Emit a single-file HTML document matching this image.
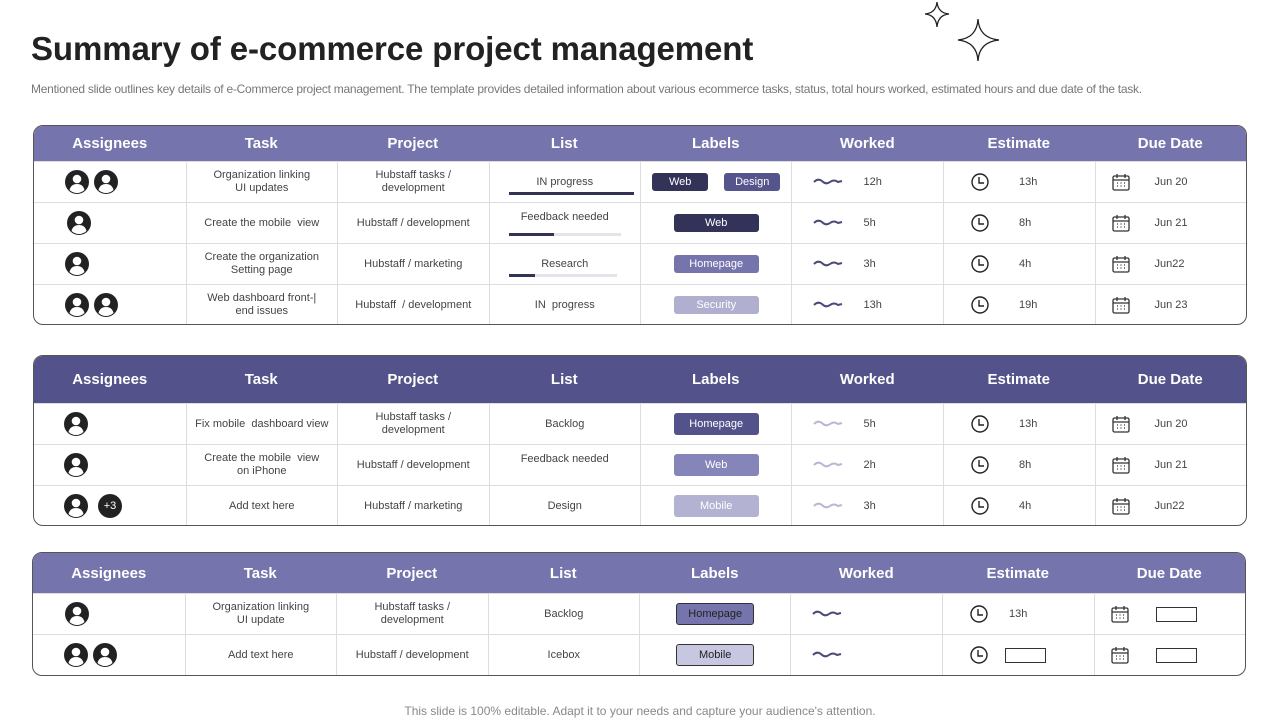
<!DOCTYPE html>
<html><head><meta charset="utf-8"><style>
*{margin:0;padding:0;box-sizing:border-box}
body{width:1280px;height:720px;background:#fff;font-family:"Liberation Sans",sans-serif;position:relative;overflow:hidden;color:#333}
h1{position:absolute;left:31px;top:30px;font-size:33px;font-weight:700;color:#222;letter-spacing:-0.1px}
.sub{position:absolute;left:31px;top:82px;font-size:12px;color:#777;letter-spacing:-0.25px}
.foot{position:absolute;left:0;width:1280px;text-align:center;top:704px;font-size:12px;color:#888}
.tbl{position:absolute;left:33px;width:1214px;border:1px solid #555;border-radius:10px;overflow:hidden;background:#fff}
.hd{display:flex;color:#fff;font-weight:700;font-size:15px;align-items:center}
.hd div{width:151.75px;text-align:center}
.row{display:flex;border-top:1px solid #ddd;height:41px}
.row>div{width:151.75px;border-left:1px solid #ddd;display:flex;align-items:center;justify-content:center;text-align:center;font-size:11px;color:#444;line-height:13px;position:relative}
.row>div:first-child{border-left:none;justify-content:flex-start;padding-left:31px}
.row>div:nth-child(6){justify-content:flex-start;padding-left:21px}
.row>div:nth-child(7){justify-content:flex-start;padding-left:26px}
.row>div:nth-child(8){justify-content:flex-start;padding-left:15px}
.tag{display:inline-block;width:85px;height:18px;line-height:18px;border-radius:3px;color:#fff;font-size:11px}
.wv{margin-right:20px}
.ck{margin-right:29px}
.cl{margin-right:24px}
</style></head><body>
<h1>Summary of e-commerce project management</h1>
<div class="sub">Mentioned slide outlines key details of e-Commerce project management. The template provides detailed information about various ecommerce tasks, status, total hours worked, estimated hours and due date of the task.</div>
<svg style="position:absolute;left:920px;top:0" width="90" height="65"><path d="M17 2 Q18 13 29 14 Q18 15 17 27 Q16 15 5 14 Q16 13 17 2Z" fill="none" stroke="#222" stroke-width="1.3"/><path d="M58 19 Q59 38 79 40 Q59 42 58 61 Q57 42 38 40 Q57 38 58 19Z" fill="none" stroke="#222" stroke-width="1.3"/></svg>

<svg width="0" height="0" style="position:absolute"><defs>
<symbol id="p" viewBox="0 0 24 24"><circle cx="12" cy="12" r="12" fill="#222"/><circle cx="12" cy="9" r="4.3" fill="#fff"/><path d="M4.5 20 Q6 14 12 14 Q18 14 19.5 20 Q16 23 12 23 Q8 23 4.5 20Z" fill="#fff"/></symbol>
<symbol id="w" viewBox="0 0 30 12"><path d="M1 6 Q5 2 9 5 Q13 9 17 6 Q21 3 25 6 L29 5" fill="none" stroke="currentColor" stroke-width="2"/></symbol>
<symbol id="c" viewBox="0 0 20 20"><circle cx="10" cy="10" r="8" fill="none" stroke="#222" stroke-width="1.4"/><path d="M9 5 V11 H14" fill="none" stroke="#222" stroke-width="1.4"/></symbol>
<symbol id="d" viewBox="0 0 20 20"><rect x="2" y="4" width="16" height="14" rx="1.5" fill="none" stroke="#333" stroke-width="1.3"/><path d="M2 8 H18 M6 2 V6 M14 2 V6" stroke="#333" stroke-width="1.3"/><path d="M6 11h1M9.5 11h1M13 11h1M6 14h1M9.5 14h1M13 14h1" stroke="#333" stroke-width="1.3"/></symbol>
</defs></svg>

<!-- Table 1 -->
<div class="tbl" style="top:125px;height:200px">
<div class="hd" style="background:#7674ac;height:35px"><div>Assignees</div><div>Task</div><div>Project</div><div>List</div><div>Labels</div><div>Worked</div><div>Estimate</div><div>Due Date</div></div>
<div class="row"><div><svg width="24" height="24" style="margin-right:5px"><use href="#p"/></svg><svg width="24" height="24"><use href="#p"/></svg></div><div>Organization linking<br>UI updates</div><div>Hubstaff tasks /<br>development</div><div><span style="position:absolute;top:14px;width:100%">IN progress</span><span style="position:absolute;left:19px;top:30px;width:125px;height:3px;background:#333355"></span></div><div><span class="tag" style="width:56px;background:#33335a;margin-right:16px">Web</span><span class="tag" style="width:56px;background:#55548c">Design</span></div><div><svg class="wv" width="30" height="12" style="color:#4a4a7a"><use href="#w"/></svg>12h</div><div><svg class="ck" width="20" height="20"><use href="#c"/></svg>13h</div><div><svg class="cl" width="20" height="20"><use href="#d"/></svg>Jun 20</div></div>
<div class="row"><div style="padding-left:33px"><svg width="24" height="24"><use href="#p"/></svg></div><div>Create the mobile&nbsp; view</div><div>Hubstaff / development</div><div><span style="position:absolute;top:8px;width:100%">Feedback needed</span><span style="position:absolute;left:19px;top:30px;width:112px;height:3px;background:#e4e4ea"></span><span style="position:absolute;left:19px;top:30px;width:45px;height:3px;background:#333355"></span></div><div><span class="tag" style="background:#33335a">Web</span></div><div><svg class="wv" width="30" height="12" style="color:#4a4a7a"><use href="#w"/></svg>5h</div><div><svg class="ck" width="20" height="20"><use href="#c"/></svg>8h</div><div><svg class="cl" width="20" height="20"><use href="#d"/></svg>Jun 21</div></div>
<div class="row"><div><svg width="24" height="24"><use href="#p"/></svg></div><div>Create the organization<br>Setting page</div><div>Hubstaff / marketing</div><div><span style="position:absolute;top:14px;width:100%">Research</span><span style="position:absolute;left:19px;top:30px;width:108px;height:3px;background:#e4e4ea"></span><span style="position:absolute;left:19px;top:30px;width:26px;height:3px;background:#333355"></span></div><div><span class="tag" style="background:#7674ac">Homepage</span></div><div><svg class="wv" width="30" height="12" style="color:#4a4a7a"><use href="#w"/></svg>3h</div><div><svg class="ck" width="20" height="20"><use href="#c"/></svg>4h</div><div><svg class="cl" width="20" height="20"><use href="#d"/></svg>Jun22</div></div>
<div class="row"><div><svg width="24" height="24" style="margin-right:5px"><use href="#p"/></svg><svg width="24" height="24"><use href="#p"/></svg></div><div>Web dashboard front-|<br>end issues</div><div>Hubstaff&nbsp; / development</div><div>IN&nbsp; progress</div><div><span class="tag" style="background:#b0afd0">Security</span></div><div><svg class="wv" width="30" height="12" style="color:#4a4a7a"><use href="#w"/></svg>13h</div><div><svg class="ck" width="20" height="20"><use href="#c"/></svg>19h</div><div><svg class="cl" width="20" height="20"><use href="#d"/></svg>Jun 23</div></div>
</div>

<!-- Table 2 -->
<div class="tbl" style="top:355px;height:171px">
<div class="hd" style="background:#53528a;height:47px"><div>Assignees</div><div>Task</div><div>Project</div><div>List</div><div>Labels</div><div>Worked</div><div>Estimate</div><div>Due Date</div></div>
<div class="row"><div style="padding-left:30px"><svg width="24" height="24"><use href="#p"/></svg></div><div>Fix mobile&nbsp; dashboard view</div><div>Hubstaff tasks /<br>development</div><div>Backlog</div><div><span class="tag" style="background:#53528a;height:22px;line-height:22px">Homepage</span></div><div><svg class="wv" width="30" height="12" style="color:#b8b8d4"><use href="#w"/></svg>5h</div><div><svg class="ck" width="20" height="20"><use href="#c"/></svg>13h</div><div><svg class="cl" width="20" height="20"><use href="#d"/></svg>Jun 20</div></div>
<div class="row"><div style="padding-left:30px"><svg width="24" height="24"><use href="#p"/></svg></div><div>Create the mobile&nbsp; view<br>on iPhone</div><div>Hubstaff / development</div><div style="align-items:flex-start;padding-top:8px">Feedback needed</div><div><span class="tag" style="background:#8685ba;height:22px;line-height:22px">Web</span></div><div><svg class="wv" width="30" height="12" style="color:#b8b8d4"><use href="#w"/></svg>2h</div><div><svg class="ck" width="20" height="20"><use href="#c"/></svg>8h</div><div><svg class="cl" width="20" height="20"><use href="#d"/></svg>Jun 21</div></div>
<div class="row"><div style="padding-left:30px"><svg width="24" height="24" style="margin-right:10px"><use href="#p"/></svg><span style="display:inline-block;width:24px;height:24px;border-radius:50%;background:#222;color:#fff;line-height:24px;font-size:11px">+3</span></div><div>Add text here</div><div>Hubstaff / marketing</div><div>Design</div><div><span class="tag" style="background:#b3b2d3;height:22px;line-height:22px">Mobile</span></div><div><svg class="wv" width="30" height="12" style="color:#b8b8d4"><use href="#w"/></svg>3h</div><div><svg class="ck" width="20" height="20"><use href="#c"/></svg>4h</div><div><svg class="cl" width="20" height="20"><use href="#d"/></svg>Jun22</div></div>
</div>

<!-- Table 3 -->
<div class="tbl" style="top:552px;height:124px;left:32px">
<div class="hd" style="background:#7674ac;height:40px"><div>Assignees</div><div>Task</div><div>Project</div><div>List</div><div>Labels</div><div>Worked</div><div>Estimate</div><div>Due Date</div></div>
<div class="row"><div style="padding-left:32px"><svg width="24" height="24"><use href="#p"/></svg></div><div>Organization linking<br>UI update</div><div>Hubstaff tasks /<br>development</div><div>Backlog</div><div><span class="tag" style="background:#7674ac;color:#222;border:1px solid #333;height:22px;line-height:20px;width:78px">Homepage</span></div><div><svg width="30" height="12" style="color:#4a4a7a"><use href="#w"/></svg></div><div><svg width="20" height="20" style="margin-right:20px"><use href="#c"/></svg>13h</div><div><svg width="20" height="20" style="margin-right:26px"><use href="#d"/></svg><span style="width:41px;height:15px;border:1px solid #333"></span></div></div>
<div class="row"><div><svg width="24" height="24" style="margin-right:5px"><use href="#p"/></svg><svg width="24" height="24"><use href="#p"/></svg></div><div>Add text here</div><div>Hubstaff / development</div><div>Icebox</div><div><span class="tag" style="background:#c8c7e2;color:#222;border:1px solid #333;height:22px;line-height:20px;width:78px">Mobile</span></div><div><svg width="30" height="12" style="color:#4a4a7a"><use href="#w"/></svg></div><div><svg width="20" height="20" style="margin-right:16px"><use href="#c"/></svg><span style="width:41px;height:15px;border:1px solid #333"></span></div><div><svg width="20" height="20" style="margin-right:26px"><use href="#d"/></svg><span style="width:41px;height:15px;border:1px solid #333"></span></div></div>
</div>

<div class="foot">This slide is 100% editable. Adapt it to your needs and capture your audience's attention.</div>
</body></html>
